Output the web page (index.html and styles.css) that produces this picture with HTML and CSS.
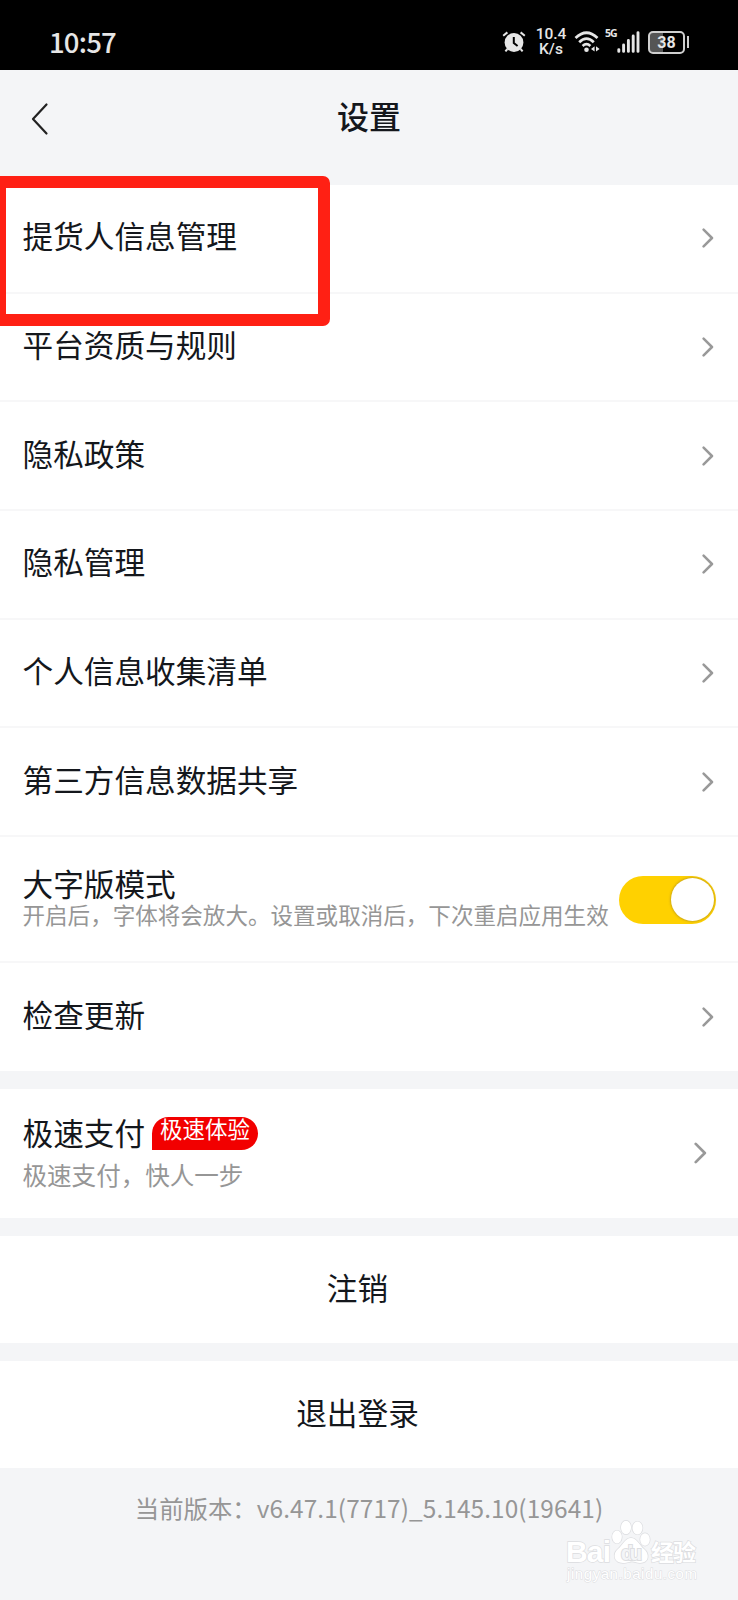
FILE: index.html
```
<!DOCTYPE html>
<html lang="zh-CN">
<head>
  <meta charset="UTF-8" />
  <meta name="viewport" content="width=device-width, initial-scale=1" />
  <title>设置</title>
  <link rel="stylesheet" href="styles.css">
</head>
<body>

  <div class="status-bar">
    <span class="clock">10:57</span>
    <div class="status-icons">
      <svg class="alarm" width="24" height="22" viewBox="0 0 24 22">
        <circle cx="12" cy="11.5" r="9.4" fill="#e6e6e6" />
        <path d="M1.2 4.8 L5.4 1.4 M22.8 4.8 L18.6 1.4 M5.4 18 L3.4 20.4 M18.6 18 L20.6 20.4" stroke="#e6e6e6" stroke-width="2" fill="none" />
        <path d="M11.8 6 V12 L15.6 15" stroke="#000" stroke-width="2" fill="none" />
      </svg>
      <span class="net-speed">10.4<br>K/s</span>
      <svg class="wifi" width="27" height="24" viewBox="0 0 27 24">
        <path d="M1.5 8 Q12.5 -2.5 23.5 8 M5.2 12.2 Q12.5 5 19.8 12.2 M8.6 16 Q12.5 12.4 16.4 16" stroke="#e6e6e6" stroke-width="2.7" fill="none" />
        <circle cx="12.5" cy="19.8" r="2.3" fill="#e6e6e6" />
        <path d="M20.6 16.2 V21.6 L17 18.9 Z M22 16.2 V21.6 L25.6 18.9 Z" fill="#e6e6e6" />
      </svg>
      <span class="net-type">5G</span>
      <svg class="signal" width="23" height="22" viewBox="0 0 23 22">
        <path d="M1.8 18.6 V20.4 M6.6 14 V20.4 M11.4 9.5 V20.4 M16.2 5 V20.4 M21 1.6 V20.4" stroke="#e6e6e6" stroke-width="2.9" stroke-linecap="round" fill="none" />
      </svg>
      <div class="battery"><span>38</span></div>
      <i class="battery-cap"></i>
    </div>
  </div>

  <header>
    <svg class="back" width="18" height="34" viewBox="0 0 18 34">
      <path d="M15.5 2.5 L2 17 L15.5 31.5" fill="none" stroke="#222" stroke-width="2.2" stroke-linecap="round" stroke-linejoin="round" />
    </svg>
    <h1>设置</h1>
  </header>

  <main>
    <section class="group">
      <div class="row">提货人信息管理
        <svg class="arrow" viewBox="0 0 12 20"><path d="M1.6 1.6 L10 10 L1.6 18.4" /></svg>
      </div>
      <div class="row">平台资质与规则
        <svg class="arrow" viewBox="0 0 12 20"><path d="M1.6 1.6 L10 10 L1.6 18.4" /></svg>
      </div>
      <div class="row">隐私政策
        <svg class="arrow" viewBox="0 0 12 20"><path d="M1.6 1.6 L10 10 L1.6 18.4" /></svg>
      </div>
      <div class="row">隐私管理
        <svg class="arrow" viewBox="0 0 12 20"><path d="M1.6 1.6 L10 10 L1.6 18.4" /></svg>
      </div>
      <div class="row">个人信息收集清单
        <svg class="arrow" viewBox="0 0 12 20"><path d="M1.6 1.6 L10 10 L1.6 18.4" /></svg>
      </div>
      <div class="row">第三方信息数据共享
        <svg class="arrow" viewBox="0 0 12 20"><path d="M1.6 1.6 L10 10 L1.6 18.4" /></svg>
      </div>
      <div class="row row-switch">
        <div class="text">
          <div>大字版模式</div>
          <p class="desc">开启后，字体将会放大。设置或取消后，下次重启应用生效</p>
        </div>
        <div class="switch"><i class="knob"></i></div>
      </div>
      <div class="row">检查更新
        <svg class="arrow" viewBox="0 0 12 20"><path d="M1.6 1.6 L10 10 L1.6 18.4" /></svg>
      </div>
    </section>

    <section class="group pay">
      <div class="text">
        <div class="pay-title">极速支付<span class="badge">极速体验</span></div>
        <p class="pay-desc">极速支付，快人一步</p>
      </div>
      <svg class="arrow" viewBox="0 0 12 20"><path d="M1.6 1.6 L10 10 L1.6 18.4" /></svg>
    </section>

    <section class="group action">注销</section>
    <section class="group action">退出登录</section>
  </main>

  <footer>当前版本：<span class="version">v6.47.1(7717)_5.145.10(19641)</span></footer>

  <div class="highlight"></div>

  <svg class="watermark" width="138" height="72" viewBox="0 0 138 72">
    <g class="mark">
      <text x="3" y="46" font-size="30" font-weight="700" textLength="45">Bai</text>
      <ellipse cx="54" cy="21" rx="4.8" ry="6.4" />
      <ellipse cx="63" cy="11.5" rx="5" ry="6.8" />
      <ellipse cx="74.5" cy="12" rx="5" ry="6.4" />
      <ellipse cx="82" cy="23.5" rx="4.8" ry="6.2" />
      <path d="M68 22 C62 22 60 29 55 33 C49 38 51 47 60 47 C65 47 66 45.5 69 45.5 C72 45.5 74 47 77 47 C86 47 87 38 81 33 C76 29 74 22 68 22 Z" />
      <text class="du" x="58" y="43.5" font-size="20" font-weight="700" textLength="21">du</text>
      <text x="88" y="44.5" font-size="23" font-weight="700" textLength="45">经验</text>
      <text class="url" x="4" y="62.5" font-size="15" textLength="130">jingyan.baidu.com</text>
    </g>
  </svg>

</body>
</html>
```
FILE: styles.css
```
:root {
  --bg: #f4f5f7;
  --card-bg: #fff;
  --text: #14171c;
  --muted: #969696;
  --line: #f7f7f8;
  --status: #e6e6e6;
  --font-family: "Noto Sans CJK SC", sans-serif;
}

* {
  box-sizing: border-box;
}

body {
  margin: 0;
  height: 1600px;
  position: relative;
  overflow: hidden;
  font-family: var(--font-family);
  font-size: 30.65px;
  background: var(--bg);
  color: var(--text);
}

p {
  margin: 0;
}

.status-bar {
  height: 70px;
  padding: 14px 49px 0 49px;
  background: #000;
  color: var(--status);
  display: flex;
  justify-content: space-between;
  align-items: center;
}

.clock {
  font-size: 27.5px;
  font-weight: 500;
  line-height: 1;
  letter-spacing: -0.8px;
}

.status-icons {
  display: flex;
  align-items: center;
}

.net-speed {
  width: 32px;
  margin: 0 7px 0 9px;
  font-family: Roboto, sans-serif;
  font-size: 15.5px;
  font-weight: 500;
  line-height: 15px;
  text-align: center;
}

.net-type {
  align-self: flex-start;
  margin: 0 0 0 4px;
  width: 12px;
  font-family: "Open Sans", sans-serif;
  font-size: 10.5px;
  font-weight: 700;
  line-height: 12px;
  letter-spacing: -1px;
}

.battery {
  width: 37px;
  height: 23px;
  margin-left: 8px;
  border: 2px solid #cfcfcf;
  border-radius: 5px;
  background: linear-gradient(90deg, #555 38%, #000 38%);
  font-family: Roboto, sans-serif;
  font-size: 16px;
  font-weight: 700;
  line-height: 19px;
  text-align: center;
}

.battery-cap {
  width: 2px;
  height: 12px;
  margin-left: 2px;
  background: #cfcfcf;
}

header {
  height: 115px;
  padding: 32px 0 0 31px;
  display: flex;
  align-items: flex-start;
}

header h1 {
  flex: 1;
  margin: 0 49px 0 0;
  font-size: 32px;
  font-weight: 500;
  line-height: 26px;
  text-align: center;
}

.group {
  background: var(--card-bg);
  margin-bottom: 18px;
}

.row {
  height: 108.7px;
  padding: 0 24px 6px 22.5px;
  border-bottom: 2px solid var(--line);
  display: flex;
  justify-content: space-between;
  align-items: center;
  line-height: 44px;
}

.row:last-child {
  height: 107.7px;
  border-bottom: none;
}

.arrow {
  width: 12px;
  height: 20px;
  position: relative;
  top: 3px;
}

.arrow path {
  fill: none;
  stroke: #999;
  stroke-width: 2.5;
  stroke-linecap: round;
  stroke-linejoin: round;
}

.row-switch {
  height: 126px;
  padding-right: 22px;
  padding-bottom: 2px;
}

.row-switch .text {
  line-height: 32px;
}

.desc {
  color: var(--muted);
  font-size: 22.55px;
  line-height: 30px;
  white-space: nowrap;
}

.switch {
  width: 97px;
  height: 48px;
  margin-top: 4px;
  padding: 2px;
  border-radius: 24px;
  background: #ffd100;
  display: flex;
  justify-content: flex-end;
}

.knob {
  width: 43px;
  height: 43px;
  border-radius: 50%;
  background: #fff;
  box-shadow: 0 0 2px 1px rgba(120, 100, 60, 0.35);
}

.pay {
  height: 129px;
  padding: 0 31px 0 22.5px;
  display: flex;
  justify-content: space-between;
  align-items: center;
}

.pay-title {
  display: flex;
  align-items: center;
  line-height: 40px;
  padding-bottom: 3px;
}

.badge {
  width: 106px;
  height: 33px;
  margin: 3px 0 0 7px;
  padding-left: 8px;
  border-radius: 17px 17px 17px 0;
  background: #f20000;
  color: #fff;
  font-size: 22.5px;
  line-height: 22px;
}

.pay-desc {
  color: var(--muted);
  font-size: 24.55px;
  line-height: 40px;
}

.pay .arrow {
  width: 13px;
  height: 22px;
  top: 0;
}

.action {
  height: 107px;
  padding-right: 23px;
  text-align: center;
  line-height: 102px;
}

footer {
  text-align: center;
  color: var(--muted);
  font-size: 24.4px;
  line-height: 43px;
}

.version {
  letter-spacing: 0.1px;
}

/* red frame around the first entry */
.highlight {
  position: absolute;
  left: -6px;
  top: 176px;
  width: 336px;
  height: 150px;
  border: 12px solid #ff2014;
  border-radius: 7px;
}

.watermark {
  position: absolute;
  left: 563px;
  top: 1516px;
}

.mark {
  fill: #fff;
  stroke: #dcdde0;
  stroke-width: 1.4;
  paint-order: stroke;
  font-family: "Liberation Sans", "Noto Sans CJK SC", sans-serif;
}

.mark .du {
  fill: #f4f5f7;
  stroke-width: 2;
}

.mark .url {
  stroke-width: 1;
}
```
